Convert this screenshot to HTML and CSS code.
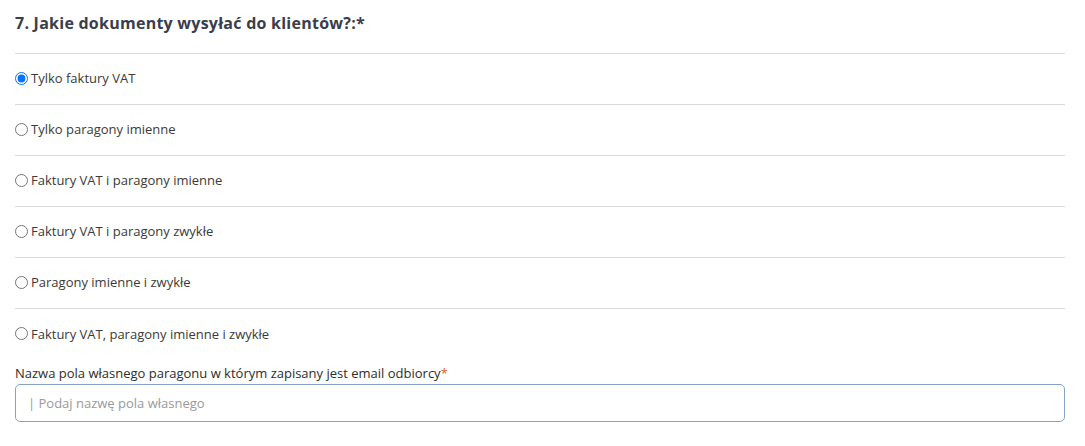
FILE: index.html
```html
<!DOCTYPE html>
<html lang="pl">
<head>
    <meta charset="UTF-8">
    <meta name="viewport" content="width=device-width, initial-scale=1.0">
    <title>Dokumenty dla klientów</title>
    <link rel="stylesheet" href="styles.css">
</head>
<body>
    <div class="question">
        <h3 class="question-title">7. Jakie dokumenty wysyłać do klientów?:*</h3>

        <!-- options list -->
        <div class="options">
            <label class="option"><input type="radio" name="docs" checked> Tylko faktury VAT</label>
            <label class="option"><input type="radio" name="docs"> Tylko paragony imienne</label>
            <label class="option"><input type="radio" name="docs"> Faktury VAT i paragony imienne</label>
            <label class="option"><input type="radio" name="docs"> Faktury VAT i paragony zwykłe</label>
            <label class="option"><input type="radio" name="docs"> Paragony imienne i zwykłe</label>
            <label class="option"><input type="radio" name="docs"> Faktury VAT, paragony imienne i zwykłe</label>
        </div>

        <div class="field">
            <label class="field-label" for="custom-field">Nazwa pola własnego paragonu w którym zapisany jest email odbiorcy<span class="required">*</span></label>
            <input type="text" id="custom-field" class="field-input" placeholder="| Podaj nazwę pola własnego">
        </div>
    </div>
</body>
</html>
```

FILE: styles.css
```css
body {
    margin: 0;
    background-color: #fff;
    font-family: "Open Sans", Arial, sans-serif;
    color: #3a3a3a;
}

.question {
    padding: 0 20px 0 15px;
}

.question-title {
    margin: 0;
    padding: 12px 0 19px;
    font-size: 16px;
    font-weight: 700;
    letter-spacing: 0.25px;
    color: #3a3d4b;
    border-bottom: 1px solid #dadada;
}

.options {
    display: flex;
    flex-direction: column;
}

.option {
    display: flex;
    align-items: center;
    height: 51px;
    padding-bottom: 2px;
    box-sizing: border-box;
    font-size: 13px;
    border-bottom: 1px solid #dadada;
    cursor: pointer;
}

.option input {
    margin: 0 3px 0 0;
    width: 13px;
    height: 13px;
}

.option:last-child {
    border-bottom: none;
}

.field {
    display: flex;
    flex-direction: column;
    gap: 2px;
    margin-top: 4px;
}

.field-label {
    font-size: 13px;
    color: #2d2d2d;
}

.required {
    color: #e25b2a;
}

.field-input {
    height: 38px;
    box-sizing: border-box;
    border: 1px solid #86a2c6;
    border-radius: 5px;
    padding: 0 12px;
    font-family: inherit;
    font-size: 13px;
    color: #333;
}

.field-input::placeholder {
    color: #9a9a9a;
}
```
